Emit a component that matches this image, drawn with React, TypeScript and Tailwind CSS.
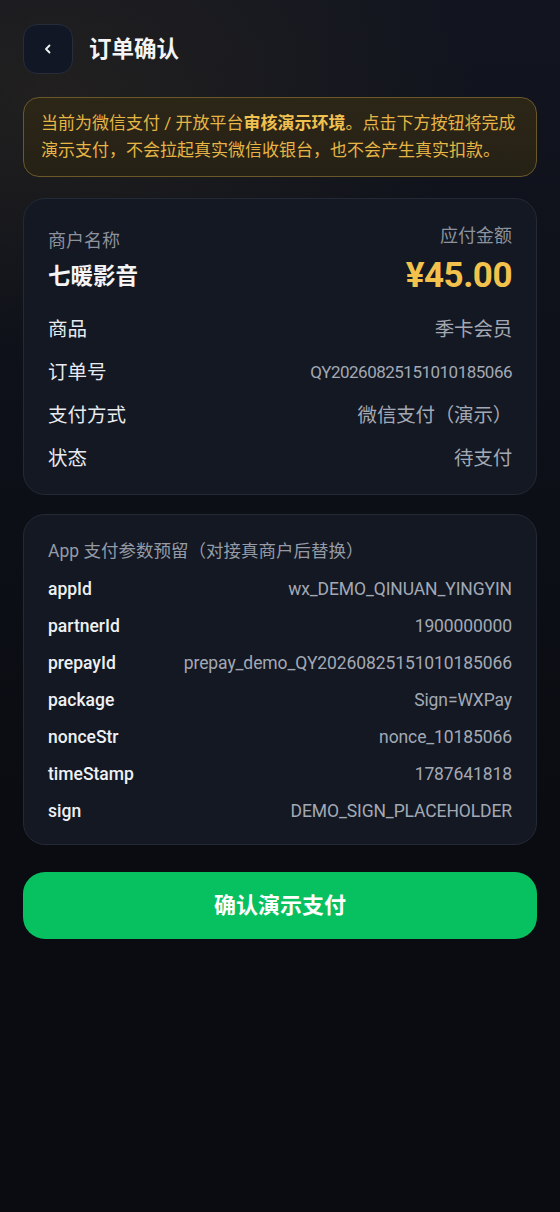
import React from "react";

const font = { fontFamily: 'Roboto, "Noto Sans CJK SC", sans-serif' };

function Row({ label, value }: { label: string; value: string }) {
  return (
    <div className="flex h-[43px] items-center justify-between">
      <span className="text-[19.5px] text-[#e8eaee]">{label}</span>
      <span className="text-[19.5px] tracking-[-0.2px] text-[#a3a9b4]">{value}</span>
    </div>
  );
}

function ParamRow({ label, value }: { label: string; value: string }) {
  return (
    <div className="flex h-[37px] items-center justify-between">
      <span className="text-[17.5px] font-medium text-[#eef0f3]">{label}</span>
      <span className="text-[17.5px] tracking-[-0.1px] text-[#a3a9b4]">{value}</span>
    </div>
  );
}

export default function App() {
  const params: [string, string][] = [
    ["appId", "wx_DEMO_QINUAN_YINGYIN"],
    ["partnerId", "1900000000"],
    ["prepayId", "prepay_demo_QY20260825151010185066"],
    ["package", "Sign=WXPay"],
    ["nonceStr", "nonce_10185066"],
    ["timeStamp", "1787641818"],
    ["sign", "DEMO_SIGN_PLACEHOLDER"],
  ];
  return (
    <div
      style={font}
      className="min-h-[1212px] w-full bg-[#0a0c11] bg-[radial-gradient(ellipse_420px_260px_at_10%_8%,rgba(120,95,40,0.16),transparent),linear-gradient(180deg,#12151f_0px,#0d1018_420px,#0a0c11_800px)] px-[23px] pt-[24px]"
    >
      <div className="flex h-[50px] items-center gap-[16px]">
        <div className="flex h-[50px] w-[50px] items-center justify-center rounded-[14px] border border-[#272d39] bg-[#111725]">
          <svg width="10" height="12" viewBox="0 0 10 12" fill="none">
            <path d="M6.5 2.5 L3 6 L6.5 9.5" stroke="#f2f3f5" strokeWidth="1.8" strokeLinecap="round" strokeLinejoin="round" />
          </svg>
        </div>
        <span className="text-[22.5px] font-bold leading-none text-[#f4f4f5]">订单确认</span>
      </div>

      <div className="mt-[23px] rounded-[16px] border border-[#6a582b] bg-[linear-gradient(180deg,#2c2617,#252115)] px-[17px] py-[12px] text-[17px] leading-[27px] text-[#e6b545]">
        <span>当前为微信支付 / 开放平台</span>
        <span className="font-bold text-[#f0c150]">审核演示环境</span>
        <span>。点击下方按钮将完成演示支付，不会拉起真实微信收银台，也不会产生真实扣款。</span>
      </div>

      <div className="mt-[21px] rounded-[22px] border border-[#242a35] bg-[#131823] px-[24px] pb-[14px] pt-[25px]">
        <div className="flex items-start justify-between">
          <div className="mt-[5px] flex flex-col">
            <span className="text-[18px] leading-[24px] text-[#8c929d]">商户名称</span>
            <span className="mt-[8px] text-[22.5px] font-bold leading-[30px] text-[#f4f4f5]">七暖影音</span>
          </div>
          <div className="flex flex-col items-end">
            <span className="text-[18px] leading-[24px] text-[#8c929d]">应付金额</span>
            <span className="mt-[6px] text-[35px] font-bold leading-[44px] tracking-[-0.5px] text-[#f2c24c]">¥45.00</span>
          </div>
        </div>
        <div className="mt-[10px]">
          <Row label="商品" value="季卡会员" />
          <div className="flex h-[43px] items-center justify-between">
            <span className="text-[19.5px] text-[#e8eaee]">订单号</span>
            <span className="text-[17px] tracking-[-0.5px] text-[#a3a9b4]">QY20260825151010185066</span>
          </div>
          <Row label="支付方式" value="微信支付（演示）" />
          <Row label="状态" value="待支付" />
        </div>
      </div>

      <div className="mt-[19px] rounded-[22px] border border-[#242a35] bg-[#131823] px-[24px] pb-[14px] pt-[24px]">
        <div className="text-[17.5px] leading-[24px] text-[#959ba6]">App 支付参数预留（对接真商户后替换）</div>
        <div className="mt-[8px]">
          {params.map(([k, v]) => (
            <ParamRow key={k} label={k} value={v} />
          ))}
        </div>
      </div>

      <button className="mt-[27px] flex h-[67px] w-full items-center justify-center rounded-[22px] bg-[#07c160] text-[22px] font-bold text-white">
        确认演示支付
      </button>
    </div>
  );
}
